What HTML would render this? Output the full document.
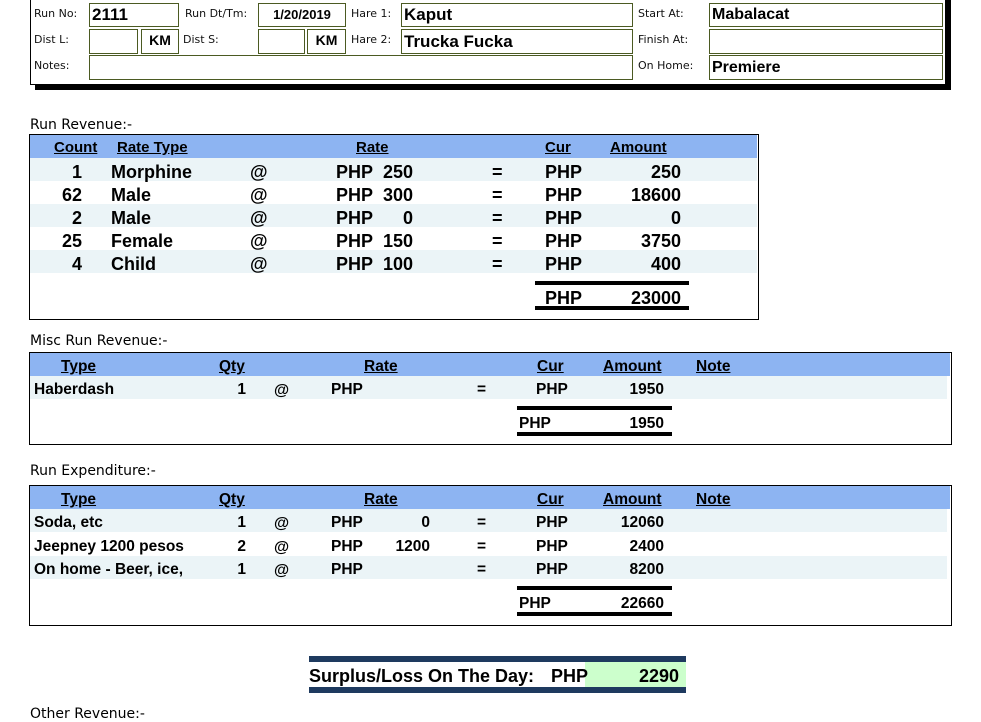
<!DOCTYPE html>
<html><head><meta charset="utf-8"><style>
*{margin:0;padding:0;box-sizing:border-box}
body{width:981px;height:717px;background:#fff;position:relative;overflow:hidden;font-family:"Liberation Sans",sans-serif;color:#000}
div{position:absolute}
.lb{color:#111;font-family:"DejaVu Sans","Liberation Sans",sans-serif;font-size:11px}
.fb{border:1.5px solid #4b5a22;background:#fff;font-weight:bold;font-size:16px;line-height:21px;padding-left:2px}
.b{font-weight:bold}
.r{text-align:right}
.u{text-decoration:underline}
.sec{font-family:"DejaVu Sans","Liberation Sans",sans-serif;font-size:14px}
.bx{border:1.5px solid #000}
.hd{background:#8db4f2}
.lt{background:#ebf4f7}
.ln{background:#000;height:4px}
.r1{font-size:18px;font-weight:bold;line-height:23px}
.r2{font-size:15.5px;font-weight:bold;line-height:23px}
</style></head><body>
<div style="left:35px;top:84px;width:916px;height:6px;background:#000"></div>
<div style="left:945px;top:0;width:6px;height:90px;background:#000"></div>
<div style="left:30px;top:-2px;width:916px;height:87px;border:1.5px solid #000;background:#fff"></div>
<div class="lb" style="left:34px;top:7px">Run No:</div>
<div class="fb" style="left:89px;top:3px;width:90px;height:24px;font-size:17px;line-height:22px">2111</div>
<div class="lb" style="left:185px;top:7px">Run Dt/Tm:</div>
<div class="fb" style="left:258px;top:3px;width:88px;height:24px;font-size:13px;text-align:center;padding:0">1/20/2019</div>
<div class="lb" style="left:351px;top:7px">Hare 1:</div>
<div class="fb" style="left:401px;top:3px;width:232px;height:24px;font-size:17px;line-height:22px">Kaput</div>
<div class="lb" style="left:638px;top:7px">Start At:</div>
<div class="fb" style="left:709px;top:3px;width:234px;height:24px;line-height:22px">Mabalacat</div>
<div class="lb" style="left:34px;top:33px">Dist L:</div>
<div class="fb" style="left:89px;top:29px;width:49px;height:25px"></div>
<div class="fb" style="left:141px;top:29px;width:38px;height:25px;text-align:center;padding:0;font-size:14px">KM</div>
<div class="lb" style="left:183px;top:33px">Dist S:</div>
<div class="fb" style="left:258px;top:29px;width:47px;height:25px"></div>
<div class="fb" style="left:307px;top:29px;width:39px;height:25px;text-align:center;padding:0;font-size:14px">KM</div>
<div class="lb" style="left:351px;top:33px">Hare 2:</div>
<div class="fb" style="left:401px;top:29px;width:232px;height:25px;font-size:17px;line-height:23px">Trucka Fucka</div>
<div class="lb" style="left:638px;top:33px">Finish At:</div>
<div class="fb" style="left:709px;top:29px;width:234px;height:25px"></div>
<div class="lb" style="left:34px;top:59px">Notes:</div>
<div class="fb" style="left:89px;top:55px;width:544px;height:25px"></div>
<div class="lb" style="left:638px;top:59px">On Home:</div>
<div class="fb" style="left:709px;top:55px;width:234px;height:25px;line-height:23px">Premiere</div>

<div class="sec" style="left:30px;top:117px">Run Revenue:-</div>
<div class="bx" style="left:29px;top:134px;width:730px;height:186px"></div>
<div class="hd" style="left:30px;top:135px;width:727px;height:23px"></div>
<div class="lt" style="left:30px;top:158px;width:727px;height:23px"></div>
<div class="lt" style="left:30px;top:204px;width:727px;height:23px"></div>
<div class="lt" style="left:30px;top:250px;width:727px;height:23px"></div>
<div class="b u" style="left:54px;top:139px;font-size:15px">Count</div>
<div class="b u" style="left:117px;top:139px;font-size:15px">Rate Type</div>
<div class="b u" style="left:356px;top:139px;font-size:15px">Rate</div>
<div class="b u" style="left:545px;top:139px;font-size:15px">Cur</div>
<div class="b u" style="left:610px;top:139px;font-size:15px">Amount</div>
<div class="r1" style="left:30px;top:161px;width:52px;text-align:right">1<br>62<br>2<br>25<br>4</div>
<div class="r1" style="left:111px;top:161px">Morphine<br>Male<br>Male<br>Female<br>Child</div>
<div class="r1" style="left:250px;top:161px">@<br>@<br>@<br>@<br>@</div>
<div class="r1" style="left:336px;top:161px">PHP<br>PHP<br>PHP<br>PHP<br>PHP</div>
<div class="r1 r" style="left:360px;top:161px;width:53px">250<br>300<br>0<br>150<br>100</div>
<div class="r1" style="left:492px;top:161px">=<br>=<br>=<br>=<br>=</div>
<div class="r1" style="left:545px;top:161px">PHP<br>PHP<br>PHP<br>PHP<br>PHP</div>
<div class="r1 r" style="left:600px;top:161px;width:81px">250<br>18600<br>0<br>3750<br>400</div>
<div class="ln" style="left:535px;top:281px;width:154px"></div>
<div class="r1" style="left:545px;top:287px">PHP</div>
<div class="r1 r" style="left:600px;top:287px;width:81px">23000</div>
<div class="ln" style="left:535px;top:306px;width:154px"></div>

<div class="sec" style="left:30px;top:333px">Misc Run Revenue:-</div>
<div class="bx" style="left:29px;top:352px;width:923px;height:93px"></div>
<div class="hd" style="left:30px;top:353px;width:920px;height:23px"></div>
<div class="lt" style="left:30px;top:376px;width:917px;height:23px"></div>
<div class="r2 u" style="left:61px;top:355px">Type</div>
<div class="r2 u" style="left:219px;top:355px">Qty</div>
<div class="r2 u" style="left:364px;top:355px">Rate</div>
<div class="r2 u" style="left:537px;top:355px">Cur</div>
<div class="r2 u" style="left:603px;top:355px">Amount</div>
<div class="r2 u" style="left:696px;top:355px">Note</div>
<div class="r2" style="left:34px;top:378px">Haberdash</div>
<div class="r2 r" style="left:200px;top:378px;width:46px">1</div>
<div class="r2" style="left:274px;top:379px">@</div>
<div class="r2" style="left:331px;top:378px">PHP</div>
<div class="r2" style="left:477px;top:378px">=</div>
<div class="r2" style="left:536px;top:378px">PHP</div>
<div class="r2 r" style="left:600px;top:378px;width:64px">1950</div>
<div class="ln" style="left:517px;top:406px;width:155px"></div>
<div class="r2" style="left:519px;top:412px">PHP</div>
<div class="r2 r" style="left:600px;top:412px;width:64px">1950</div>
<div class="ln" style="left:517px;top:432px;width:155px"></div>

<div class="sec" style="left:30px;top:463px">Run Expenditure:-</div>
<div class="bx" style="left:29px;top:485px;width:923px;height:141px"></div>
<div class="hd" style="left:30px;top:486px;width:920px;height:23px"></div>
<div class="lt" style="left:30px;top:509px;width:917px;height:23px"></div>
<div class="lt" style="left:30px;top:556px;width:917px;height:23px"></div>
<div class="r2 u" style="left:61px;top:488px">Type</div>
<div class="r2 u" style="left:219px;top:488px">Qty</div>
<div class="r2 u" style="left:364px;top:488px">Rate</div>
<div class="r2 u" style="left:537px;top:488px">Cur</div>
<div class="r2 u" style="left:603px;top:488px">Amount</div>
<div class="r2 u" style="left:696px;top:488px">Note</div>
<div class="r2" style="left:34px;top:511px;line-height:23.5px">Soda, etc<br>Jeepney 1200 pesos<br>On home - Beer, ice,</div>
<div class="r2 r" style="left:200px;top:511px;width:46px;line-height:23.5px">1<br>2<br>1</div>
<div class="r2" style="left:274px;top:512px;line-height:23.5px">@<br>@<br>@</div>
<div class="r2" style="left:331px;top:511px;line-height:23.5px">PHP<br>PHP<br>PHP</div>
<div class="r2 r" style="left:380px;top:511px;width:50px;line-height:23.5px">0<br>1200</div>
<div class="r2" style="left:477px;top:511px;line-height:23.5px">=<br>=<br>=</div>
<div class="r2" style="left:536px;top:511px;line-height:23.5px">PHP<br>PHP<br>PHP</div>
<div class="r2 r" style="left:600px;top:511px;width:64px;line-height:23.5px">12060<br>2400<br>8200</div>
<div class="ln" style="left:517px;top:586px;width:155px"></div>
<div class="r2" style="left:519px;top:592px">PHP</div>
<div class="r2 r" style="left:600px;top:592px;width:64px">22660</div>
<div class="ln" style="left:517px;top:612px;width:155px"></div>

<div style="left:309px;top:656px;width:377px;height:6px;background:#1e3a5f"></div>
<div style="left:585px;top:662px;width:101px;height:25px;background:#ccffcc"></div>
<div style="left:309px;top:687px;width:377px;height:6px;background:#1e3a5f"></div>
<div class="b" style="left:309px;top:665px;font-size:18px;line-height:22px">Surplus/Loss On The Day:</div>
<div class="b" style="left:551px;top:665px;font-size:18px;line-height:22px">PHP</div>
<div class="b r" style="left:600px;top:665px;width:79px;font-size:18px;line-height:22px">2290</div>

<div class="sec" style="left:30px;top:706px">Other Revenue:-</div>
</body></html>
